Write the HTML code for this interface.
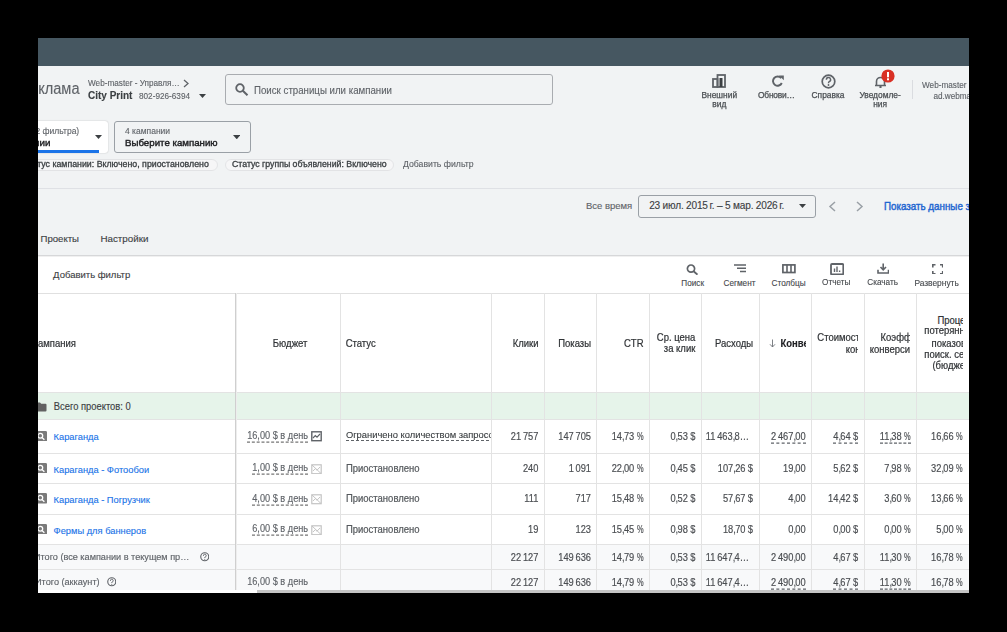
<!DOCTYPE html>
<html><head><meta charset="utf-8"><style>
html,body{margin:0;padding:0;width:1007px;height:632px;overflow:hidden;background:#000;position:relative}
body{font-family:"Liberation Sans", sans-serif}
.t{position:absolute;white-space:nowrap;line-height:1;font-family:"Liberation Sans", sans-serif;-webkit-text-stroke-width:0.12px}
div,svg{position:absolute}
</style></head><body>
<div id="wrap" style="position:absolute;left:0;top:0;width:1007px;height:632px;filter:blur(0.5px)">
<div style="position:absolute;left:0.00px;top:0.00px;width:1007.00px;height:256.00px;background:#f1f3f4"></div>
<div style="position:absolute;left:0.00px;top:38.00px;width:1007.00px;height:28.00px;background:#465761"></div>
<div style="position:absolute;left:0.00px;top:188.00px;width:1007.00px;height:1.00px;background:#dfe1e5"></div>
<div class="t" style="left:-320.50px;width:400px;text-align:right;top:82.44px;font-size:14.6px;color:#5f6368;font-weight:normal;transform:scaleY(1.080);transform-origin:0 7.25px;">Реклама</div>
<div class="t" style="left:88.00px;top:80.06px;font-size:8.2px;color:#5f6368;font-weight:normal;">Web-master - Управля…</div>
<svg style="position:absolute;left:182.00px;top:79.00px" width="8" height="9" viewBox="0 0 8 9"><path d="M2 1 L6 4.5 L2 8" stroke="#5f6368" stroke-width="1.3" fill="none"/></svg>
<div class="t" style="left:88.00px;top:91.13px;font-size:10px;color:#3c4043;font-weight:bold;">City Print</div>
<div class="t" style="left:139.00px;top:92.66px;font-size:8.2px;color:#5f6368;font-weight:normal;">802-926-6394</div>
<svg style="position:absolute;left:199.00px;top:94.00px" width="7" height="5" viewBox="0 0 7 5"><path d="M0 0 H7 L3.5 4 Z" fill="#3c4043"/></svg>
<div style="position:absolute;left:225.30px;top:73.80px;width:327.40px;height:31.40px;border:1.8px solid #a9acb0;border-radius:3px;box-sizing:border-box"></div>
<svg style="position:absolute;left:235.00px;top:83.00px" width="14" height="13" viewBox="0 0 14 13"><circle cx="5" cy="5" r="3.8" stroke="#5f6368" stroke-width="1.8" fill="none"/><path d="M7.8 7.8 L12.5 12.3" stroke="#5f6368" stroke-width="2" /></svg>
<div class="t" style="left:254.00px;top:85.69px;font-size:9.7px;color:#5f6368;font-weight:normal;transform:scaleY(1.060);transform-origin:0 4.82px;">Поиск страницы или кампании</div>
<svg style="position:absolute;left:712.00px;top:74.00px" width="15" height="14" viewBox="0 0 15 14"><rect x="5.5" y="1" width="7.5" height="12" stroke="#5f6368" stroke-width="1.8" fill="none"/><rect x="1" y="5" width="4.5" height="8" stroke="#5f6368" stroke-width="1.8" fill="none"/><rect x="7.5" y="4" width="3" height="9" fill="#3c4043"/></svg>
<div class="t" style="left:519.30px;width:400px;text-align:center;top:91.49px;font-size:8.4px;color:#4a4e52;font-weight:normal;"><span style="-webkit-text-stroke:0.25px #4a4e52">Внешний</span></div>
<div class="t" style="left:519.30px;width:400px;text-align:center;top:100.49px;font-size:8.4px;color:#4a4e52;font-weight:normal;"><span style="-webkit-text-stroke:0.25px #4a4e52">вид</span></div>
<svg style="position:absolute;left:771.00px;top:74.00px" width="14" height="13" viewBox="0 0 14 13"><path d="M10.2 4.2 A4.6 4.6 0 1 0 10.8 9" stroke="#5f6368" stroke-width="1.9" fill="none"/><path d="M8 1.5 L12.8 1.5 L12.8 6.3 Z" fill="#5f6368"/></svg>
<div class="t" style="left:576.40px;width:400px;text-align:center;top:91.29px;font-size:8.4px;color:#4a4e52;font-weight:normal;"><span style="-webkit-text-stroke:0.25px #4a4e52;letter-spacing:-0.2px">Обнови…</span></div>
<svg style="position:absolute;left:820.50px;top:73.50px" width="15" height="15" viewBox="0 0 15 15"><circle cx="7.5" cy="7.5" r="6.3" stroke="#5f6368" stroke-width="1.7" fill="none"/><path d="M5.4 5.8 A2.1 2.1 0 1 1 8.2 7.6 C7.6 8 7.5 8.3 7.5 9.2" stroke="#5f6368" stroke-width="1.5" fill="none"/><circle cx="7.5" cy="11" r="0.9" fill="#5f6368"/></svg>
<div class="t" style="left:628.00px;width:400px;text-align:center;top:91.49px;font-size:8.4px;color:#4a4e52;font-weight:normal;"><span style="-webkit-text-stroke:0.25px #4a4e52">Справка</span></div>
<svg style="position:absolute;left:873.50px;top:75.00px" width="13" height="13" viewBox="0 0 13 13"><path d="M2.5 10 V6.5 A4 4 0 0 1 10.5 6.5 V10 M1 10.5 H12" stroke="#5f6368" stroke-width="1.6" fill="none"/><circle cx="6.5" cy="12" r="1.2" fill="#5f6368"/></svg>
<svg style="position:absolute;left:880.50px;top:68.50px" width="14" height="14" viewBox="0 0 14 14"><circle cx="7" cy="7" r="6.6" fill="#d93025"/><rect x="6" y="3" width="2" height="5.3" fill="#fff"/><rect x="6" y="9.3" width="2" height="2" fill="#fff"/></svg>
<div class="t" style="left:680.10px;width:400px;text-align:center;top:91.49px;font-size:8.4px;color:#4a4e52;font-weight:normal;"><span style="-webkit-text-stroke:0.25px #4a4e52">Уведомле-</span></div>
<div class="t" style="left:680.10px;width:400px;text-align:center;top:100.19px;font-size:8.4px;color:#4a4e52;font-weight:normal;"><span style="-webkit-text-stroke:0.25px #4a4e52">ния</span></div>
<div style="position:absolute;left:912.00px;top:80.00px;width:1.00px;height:19.00px;background:#dadce0"></div>
<div class="t" style="left:922.00px;top:81.66px;font-size:8.2px;color:#5f6368;font-weight:normal;transform:scaleY(1.120);transform-origin:0 4.07px;">Web-master</div>
<div class="t" style="left:933.40px;top:92.56px;font-size:8.2px;color:#5f6368;font-weight:normal;transform:scaleY(1.120);transform-origin:0 4.07px;">ad.webmaster</div>
<div style="position:absolute;left:0.00px;top:121.00px;width:108.00px;height:32.30px;background:#fff;border-radius:3px;box-shadow:0 0 1.5px rgba(0,0,0,0.25)"></div>
<div style="position:absolute;left:0.00px;top:149.80px;width:98.60px;height:3.00px;background:#1a73e8"></div>
<div class="t" style="left:-320.80px;width:400px;text-align:right;top:127.20px;font-size:8.5px;color:#5f6368;font-weight:normal;">(2 фильтра)</div>
<div class="t" style="left:-349.60px;width:400px;text-align:right;top:137.50px;font-size:9.8px;color:#202124;font-weight:normal;"><span style="-webkit-text-stroke:0.4px #202124">Кампании</span></div>
<svg style="position:absolute;left:95.00px;top:135.00px" width="7" height="4.5" viewBox="0 0 7 4.5"><path d="M0 0 H7 L3.5 4 Z" fill="#3c4043"/></svg>
<div style="position:absolute;left:113.50px;top:121.00px;width:137.00px;height:31.80px;border:1.5px solid #9aa0a6;border-radius:3px;box-sizing:border-box"></div>
<div class="t" style="left:125.00px;top:127.10px;font-size:8.5px;color:#5f6368;font-weight:normal;">4 кампании</div>
<div class="t" style="left:125.00px;top:137.69px;font-size:9.7px;color:#202124;font-weight:normal;"><span style="-webkit-text-stroke:0.4px #202124">Выберите кампанию</span></div>
<svg style="position:absolute;left:232.70px;top:134.50px" width="7.5" height="4.8" viewBox="0 0 7.5 4.8"><path d="M0 0 H7.5 L3.75 4.3 Z" fill="#3c4043"/></svg>
<div style="position:absolute;left:-20.00px;top:158.60px;width:237.50px;height:12.00px;border:1px solid #e2e3e5;background:#f6f6f7;border-radius:7px;box-sizing:border-box"></div>
<div class="t" style="left:-191.20px;width:400px;text-align:right;top:159.85px;font-size:8.8px;color:#3c4043;font-weight:normal;"><span style="-webkit-text-stroke:0.3px #3c4043">Статус кампании: Включено, приостановлено</span></div>
<div style="position:absolute;left:224.80px;top:158.60px;width:169.70px;height:12.00px;border:1px solid #e2e3e5;background:#f6f6f7;border-radius:7px;box-sizing:border-box"></div>
<div class="t" style="left:232.00px;top:159.89px;font-size:8.75px;color:#3c4043;font-weight:normal;"><span style="-webkit-text-stroke:0.3px #3c4043">Статус группы объявлений: Включено</span></div>
<div class="t" style="left:403.00px;top:159.94px;font-size:8.7px;color:#5f6368;font-weight:normal;">Добавить фильтр</div>
<div class="t" style="left:585.90px;top:201.26px;font-size:9.5px;color:#5f6368;font-weight:normal;">Все время</div>
<div style="position:absolute;left:638.00px;top:194.50px;width:178.30px;height:23.20px;border:1.5px solid #9aa0a6;border-radius:3px;box-sizing:border-box"></div>
<div class="t" style="left:649.20px;top:201.05px;font-size:10.1px;color:#3c4043;font-weight:normal;"><span style="letter-spacing:-0.2px">23 июл. 2015&#8201;г. – 5 мар. 2026&#8201;г.</span></div>
<svg style="position:absolute;left:799.30px;top:204.00px" width="7" height="4.5" viewBox="0 0 7 4.5"><path d="M0 0 H7 L3.5 4 Z" fill="#3c4043"/></svg>
<svg style="position:absolute;left:828.00px;top:200.50px" width="9" height="11" viewBox="0 0 9 11"><path d="M7 1 L2 5.5 L7 10" stroke="#9aa0a6" stroke-width="1.5" fill="none"/></svg>
<svg style="position:absolute;left:855.00px;top:200.50px" width="9" height="11" viewBox="0 0 9 11"><path d="M2 1 L7 5.5 L2 10" stroke="#9aa0a6" stroke-width="1.5" fill="none"/></svg>
<div class="t" style="left:884.00px;top:201.50px;font-size:9.8px;color:#1f66d1;font-weight:normal;transform:scaleY(1.040);transform-origin:0 4.87px;"><span style="-webkit-text-stroke:0.4px #1f66d1">Показать данные за</span></div>
<div class="t" style="left:40.50px;top:233.97px;font-size:9.6px;color:#3c4043;font-weight:normal;">Проекты</div>
<div class="t" style="left:100.40px;top:233.80px;font-size:9.8px;color:#3c4043;font-weight:normal;">Настройки</div>
<div style="position:absolute;left:0.00px;top:254.60px;width:1007.00px;height:1.60px;background:#d6d7d9"></div>
<div style="position:absolute;left:0.00px;top:256.20px;width:1007.00px;height:375.80px;background:#fff"></div>
<div style="position:absolute;left:0.00px;top:256.20px;width:1007.00px;height:1.00px;background:#f0f0f0"></div>
<div class="t" style="left:53.10px;top:270.16px;font-size:9.5px;color:#3c4043;font-weight:normal;">Добавить фильтр</div>
<svg style="position:absolute;left:686.00px;top:263.50px" width="13" height="11" viewBox="0 0 13 11"><circle cx="5" cy="4.6" r="3.6" stroke="#5f6368" stroke-width="1.7" fill="none"/><path d="M7.6 7.2 L11.5 10.6" stroke="#5f6368" stroke-width="1.9"/></svg>
<div class="t" style="left:492.70px;width:400px;text-align:center;top:279.56px;font-size:8.2px;color:#474a4e;font-weight:normal;">Поиск</div>
<svg style="position:absolute;left:733.50px;top:264.00px" width="13" height="9" viewBox="0 0 13 9"><path d="M0 1 H12 M3 4.3 H12 M6 7.6 H12" stroke="#5f6368" stroke-width="1.5"/></svg>
<div class="t" style="left:539.50px;width:400px;text-align:center;top:279.56px;font-size:8.2px;color:#474a4e;font-weight:normal;">Сегмент</div>
<svg style="position:absolute;left:782.00px;top:264.00px" width="14" height="9.5" viewBox="0 0 14 9.5"><rect x="0.9" y="0.9" width="12" height="7.6" stroke="#5f6368" stroke-width="1.7" fill="none"/><path d="M5 1 V8.5 M9 1 V8.5" stroke="#5f6368" stroke-width="1.6"/></svg>
<div class="t" style="left:588.60px;width:400px;text-align:center;top:279.56px;font-size:8.2px;color:#474a4e;font-weight:normal;">Столбцы</div>
<svg style="position:absolute;left:829.50px;top:262.80px" width="14.5" height="12.5" viewBox="0 0 14.5 12.5"><rect x="1" y="1" width="12.3" height="10.5" rx="1" stroke="#5f6368" stroke-width="1.8" fill="none"/><path d="M4.5 9 V5.5 M7 9 V3.5 M9.6 9 V7.5" stroke="#5f6368" stroke-width="1.4"/></svg>
<div class="t" style="left:636.20px;width:400px;text-align:center;top:279.46px;font-size:8.2px;color:#474a4e;font-weight:normal;">Отчеты</div>
<svg style="position:absolute;left:876.50px;top:263.00px" width="12.5" height="11" viewBox="0 0 12.5 11"><path d="M6.2 0.5 V6.5 M3.5 4 L6.2 6.8 L9 4" stroke="#5f6368" stroke-width="1.6" fill="none"/><path d="M1 6.8 V10 H11.5 V6.8" stroke="#5f6368" stroke-width="1.6" fill="none"/></svg>
<div class="t" style="left:682.60px;width:400px;text-align:center;top:279.46px;font-size:8.2px;color:#474a4e;font-weight:normal;">Скачать</div>
<svg style="position:absolute;left:931.50px;top:263.50px" width="11.5" height="10.5" viewBox="0 0 11.5 10.5"><path d="M0.8 3.5 V0.8 H3.5 M8 0.8 H10.7 V3.5 M10.7 7 V9.7 H8 M3.5 9.7 H0.8 V7" stroke="#5f6368" stroke-width="1.6" fill="none"/></svg>
<div class="t" style="left:736.60px;width:400px;text-align:center;top:279.29px;font-size:8.4px;color:#474a4e;font-weight:normal;">Развернуть</div>
<div style="position:absolute;left:0.00px;top:292.50px;width:1007.00px;height:1.00px;background:#e0e0e0"></div>
<div style="position:absolute;left:0.00px;top:392.50px;width:1007.00px;height:27.00px;background:#e6f4ea"></div>
<div style="position:absolute;left:0.00px;top:545.00px;width:1007.00px;height:48.00px;background:#f8f9fa"></div>
<div style="position:absolute;left:0.00px;top:392.00px;width:1007.00px;height:1.00px;background:#e3e3e3"></div>
<div style="position:absolute;left:0.00px;top:419.00px;width:1007.00px;height:1.00px;background:#e3e3e3"></div>
<div style="position:absolute;left:0.00px;top:452.70px;width:1007.00px;height:1.00px;background:#e3e3e3"></div>
<div style="position:absolute;left:0.00px;top:483.30px;width:1007.00px;height:1.00px;background:#e3e3e3"></div>
<div style="position:absolute;left:0.00px;top:513.70px;width:1007.00px;height:1.00px;background:#e3e3e3"></div>
<div style="position:absolute;left:0.00px;top:544.30px;width:1007.00px;height:1.00px;background:#e3e3e3"></div>
<div style="position:absolute;left:0.00px;top:569.30px;width:1007.00px;height:1.00px;background:#e3e3e3"></div>
<div style="position:absolute;left:340.30px;top:293.00px;width:1.00px;height:300.00px;background:#e3e3e3"></div>
<div style="position:absolute;left:491.30px;top:293.00px;width:1.00px;height:300.00px;background:#e3e3e3"></div>
<div style="position:absolute;left:543.50px;top:293.00px;width:1.00px;height:300.00px;background:#e3e3e3"></div>
<div style="position:absolute;left:596.30px;top:293.00px;width:1.00px;height:300.00px;background:#e3e3e3"></div>
<div style="position:absolute;left:648.50px;top:293.00px;width:1.00px;height:300.00px;background:#e3e3e3"></div>
<div style="position:absolute;left:701.00px;top:293.00px;width:1.00px;height:300.00px;background:#e3e3e3"></div>
<div style="position:absolute;left:759.00px;top:293.00px;width:1.00px;height:300.00px;background:#e3e3e3"></div>
<div style="position:absolute;left:810.80px;top:293.00px;width:1.00px;height:300.00px;background:#e3e3e3"></div>
<div style="position:absolute;left:863.50px;top:293.00px;width:1.00px;height:300.00px;background:#e3e3e3"></div>
<div style="position:absolute;left:916.00px;top:293.00px;width:1.00px;height:300.00px;background:#e3e3e3"></div>
<div style="position:absolute;left:235.20px;top:293.00px;width:1.20px;height:300.00px;background:#cfcfcf"></div>
<div style="position:absolute;left:236.40px;top:293.00px;width:1.00px;height:300.00px;background:#ededed"></div>
<div style="position:absolute;left:256.50px;top:589.80px;width:712.50px;height:3.20px;background:#c4c4c4"></div>
<div style="position:absolute;left:0.00px;top:589.80px;width:256.50px;height:3.20px;background:#fff"></div>
<div class="t" style="left:-324.10px;width:400px;text-align:right;top:338.66px;font-size:9.5px;color:#303336;font-weight:normal;transform:scaleY(1.080);transform-origin:0 4.72px;"><span style="-webkit-text-stroke:0.2px #303336">Кампания</span></div>
<div class="t" style="left:272.80px;top:338.57px;font-size:9.6px;color:#303336;font-weight:normal;transform:scaleY(1.080);transform-origin:0 4.77px;"><span style="-webkit-text-stroke:0.2px #303336">Бюджет</span></div>
<div class="t" style="left:345.70px;top:338.66px;font-size:9.5px;color:#303336;font-weight:normal;transform:scaleY(1.080);transform-origin:0 4.72px;"><span style="-webkit-text-stroke:0.2px #303336">Статус</span></div>
<div class="t" style="left:138.60px;width:400px;text-align:right;top:338.66px;font-size:9.5px;color:#303336;font-weight:normal;transform:scaleY(1.080);transform-origin:0 4.72px;"><span style="-webkit-text-stroke:0.2px #303336">Клики</span></div>
<div class="t" style="left:191.00px;width:400px;text-align:right;top:338.66px;font-size:9.5px;color:#303336;font-weight:normal;transform:scaleY(1.080);transform-origin:0 4.72px;"><span style="-webkit-text-stroke:0.2px #303336">Показы</span></div>
<div class="t" style="left:243.50px;width:400px;text-align:right;top:338.66px;font-size:9.5px;color:#303336;font-weight:normal;transform:scaleY(1.080);transform-origin:0 4.72px;"><span style="-webkit-text-stroke:0.2px #303336">CTR</span></div>
<div class="t" style="left:295.40px;width:400px;text-align:right;top:333.46px;font-size:9.5px;color:#303336;font-weight:normal;transform:scaleY(1.080);transform-origin:0 4.72px;"><span style="-webkit-text-stroke:0.2px #303336">Ср. цена</span></div>
<div class="t" style="left:295.40px;width:400px;text-align:right;top:344.46px;font-size:9.5px;color:#303336;font-weight:normal;transform:scaleY(1.080);transform-origin:0 4.72px;"><span style="-webkit-text-stroke:0.2px #303336">за клик</span></div>
<div class="t" style="left:353.20px;width:400px;text-align:right;top:338.66px;font-size:9.5px;color:#303336;font-weight:normal;transform:scaleY(1.080);transform-origin:0 4.72px;"><span style="-webkit-text-stroke:0.2px #303336">Расходы</span></div>
<svg style="position:absolute;left:768.50px;top:339.00px" width="7" height="9" viewBox="0 0 7 9"><path d="M3.5 0.5 V8 M1 5.3 L3.5 8 L6 5.3" stroke="#6f7378" stroke-width="0.9" fill="none"/></svg>
<div style="position:absolute;left:780.5px;top:330px;width:25.5px;height:24px;overflow:hidden"><div class="t" style="left:0;top:8.66px;font-size:9.5px;color:#202124;font-weight:bold;transform:scaleY(1.08);transform-origin:0 4.72px">Конверсии</div></div>
<div style="position:absolute;left:817.30px;top:329.50px;width:40.60px;height:15.00px;overflow:hidden"><div class="t" style="left:0;top:3.96px;font-size:9.5px;color:#303336;font-weight:normal;-webkit-text-stroke:0.2px #303336;transform:scaleY(1.08);transform-origin:0 4.72px">Стоимость/</div></div>
<div style="position:absolute;left:845.70px;top:340.90px;width:12.20px;height:15.00px;overflow:hidden"><div class="t" style="left:0;top:3.96px;font-size:9.5px;color:#303336;font-weight:normal;-webkit-text-stroke:0.2px #303336;transform:scaleY(1.08);transform-origin:0 4.72px">конв.</div></div>
<div style="position:absolute;left:880.50px;top:329.50px;width:29.80px;height:15.00px;overflow:hidden"><div class="t" style="left:0;top:3.96px;font-size:9.5px;color:#303336;font-weight:normal;-webkit-text-stroke:0.2px #303336;transform:scaleY(1.08);transform-origin:0 4.72px">Коэффициент</div></div>
<div style="position:absolute;left:869.70px;top:340.90px;width:40.60px;height:15.00px;overflow:hidden"><div class="t" style="left:0;top:3.96px;font-size:9.5px;color:#303336;font-weight:normal;-webkit-text-stroke:0.2px #303336;transform:scaleY(1.08);transform-origin:0 4.72px">конверсии</div></div>
<div style="position:absolute;left:937.40px;top:312.00px;width:25.40px;height:15.00px;overflow:hidden"><div class="t" style="left:0;top:3.96px;font-size:9.5px;color:#303336;font-weight:normal;-webkit-text-stroke:0.2px #303336;transform:scaleY(1.08);transform-origin:0 4.72px">Процент</div></div>
<div style="position:absolute;left:924.30px;top:322.30px;width:38.50px;height:15.00px;overflow:hidden"><div class="t" style="left:0;top:3.96px;font-size:9.5px;color:#303336;font-weight:normal;-webkit-text-stroke:0.2px #303336;transform:scaleY(1.08);transform-origin:0 4.72px">потерянных</div></div>
<div style="position:absolute;left:931.50px;top:334.60px;width:31.30px;height:15.00px;overflow:hidden"><div class="t" style="left:0;top:3.96px;font-size:9.5px;color:#303336;font-weight:normal;-webkit-text-stroke:0.2px #303336;transform:scaleY(1.08);transform-origin:0 4.72px">показов</div></div>
<div style="position:absolute;left:924.30px;top:346.20px;width:38.50px;height:15.00px;overflow:hidden"><div class="t" style="left:0;top:3.96px;font-size:9.5px;color:#303336;font-weight:normal;-webkit-text-stroke:0.2px #303336;transform:scaleY(1.08);transform-origin:0 4.72px">поиск. сеть</div></div>
<div style="position:absolute;left:932.40px;top:357.10px;width:30.40px;height:15.00px;overflow:hidden"><div class="t" style="left:0;top:3.96px;font-size:9.5px;color:#303336;font-weight:normal;-webkit-text-stroke:0.2px #303336;transform:scaleY(1.08);transform-origin:0 4.72px">(бюджет)</div></div>
<svg style="position:absolute;left:36.00px;top:402.00px" width="11" height="9.5" viewBox="0 0 11 9.5"><path d="M0.5 1.5 Q0.5 0.5 1.5 0.5 H4 L5.2 1.8 H9.5 Q10.5 1.8 10.5 2.8 V8.5 Q10.5 9.5 9.5 9.5 H1.5 Q0.5 9.5 0.5 8.5 Z" fill="#616161"/></svg>
<div class="t" style="left:53.80px;top:401.64px;font-size:9.4px;color:#3c4043;font-weight:normal;transform:scaleY(1.140);transform-origin:0 4.67px;">Всего проектов: 0</div>
<svg style="position:absolute;left:35.50px;top:430.75px" width="11.2" height="10.6" viewBox="0 0 11.2 10.6"><rect x="0" y="0" width="11.2" height="10.6" rx="1.5" fill="#7a7a7a"/><circle cx="4.3" cy="4.8" r="2.4" stroke="#fff" stroke-width="1.3" fill="none"/><path d="M6 6.6 L8.4 8.8" stroke="#fff" stroke-width="1.4"/></svg>
<div class="t" style="left:53.60px;top:433.38px;font-size:9.3px;color:#1a73e8;font-weight:normal;">Караганда</div>
<div class="t" style="left:-91.90px;width:400px;text-align:right;top:432.06px;font-size:9.2px;color:#5f6368;font-weight:normal;transform:scaleY(1.140);transform-origin:0 4.57px;"><span style="border-bottom:1px dashed #757575">16,00 $ в день</span></div>
<svg style="position:absolute;left:311.00px;top:431.35px" width="11" height="10.5" viewBox="0 0 11 10.5"><rect x="0.8" y="0.8" width="9.4" height="8.9" stroke="#5f6368" stroke-width="1.4" fill="none"/><path d="M2 7 L4.3 4.6 L6 6.2 L9 3" stroke="#5f6368" stroke-width="1.1" fill="none"/></svg>
<div style="position:absolute;left:345.9px;top:426.85px;width:145.5px;height:14px;overflow:hidden"><div class="t" style="left:0;top:3.04px;font-size:9.4px;color:#3c4043"><span style="border-bottom:1px dashed #5f6368">Ограничено количеством запросов</span></div></div>
<div class="t" style="left:138.40px;width:400px;text-align:right;top:432.78px;font-size:9.3px;color:#4a4d51;font-weight:normal;transform:scaleY(1.140);transform-origin:0 4.62px;"><span style=";-webkit-text-stroke:0.15px #4a4d51">21<span style="letter-spacing:-0.9px"> </span>757</span></div>
<div class="t" style="left:191.00px;width:400px;text-align:right;top:432.78px;font-size:9.3px;color:#4a4d51;font-weight:normal;transform:scaleY(1.140);transform-origin:0 4.62px;"><span style=";-webkit-text-stroke:0.15px #4a4d51">147<span style="letter-spacing:-0.9px"> </span>705</span></div>
<div class="t" style="left:243.20px;width:400px;text-align:right;top:432.78px;font-size:9.3px;color:#4a4d51;font-weight:normal;transform:scaleY(1.140);transform-origin:0 4.62px;"><span style=";-webkit-text-stroke:0.15px #4a4d51">14<span style="letter-spacing:-0.7px">,</span>73<span style="letter-spacing:-0.3px"> </span><span style="display:inline-block;transform:scaleX(.8);transform-origin:0 0;margin-right:-1.65px">%</span></span></div>
<div class="t" style="left:295.30px;width:400px;text-align:right;top:432.78px;font-size:9.3px;color:#4a4d51;font-weight:normal;transform:scaleY(1.140);transform-origin:0 4.62px;"><span style=";-webkit-text-stroke:0.15px #4a4d51">0<span style="letter-spacing:-0.7px">,</span>53<span style="letter-spacing:-0.3px"> </span>$</span></div>
<div class="t" style="left:349.00px;width:400px;text-align:right;top:432.78px;font-size:9.3px;color:#4a4d51;font-weight:normal;transform:scaleY(1.140);transform-origin:0 4.62px;"><span style=";-webkit-text-stroke:0.15px #4a4d51">11<span style="letter-spacing:-0.9px"> </span>463<span style="letter-spacing:-0.7px">,</span>8…</span></div>
<div class="t" style="left:405.70px;width:400px;text-align:right;top:432.78px;font-size:9.3px;color:#4a4d51;font-weight:normal;transform:scaleY(1.140);transform-origin:0 4.62px;"><span style="border-bottom:1px dashed #5f6368;-webkit-text-stroke:0.15px #4a4d51">2<span style="letter-spacing:-0.9px"> </span>467<span style="letter-spacing:-0.7px">,</span>00</span></div>
<div class="t" style="left:458.10px;width:400px;text-align:right;top:432.78px;font-size:9.3px;color:#4a4d51;font-weight:normal;transform:scaleY(1.140);transform-origin:0 4.62px;"><span style="border-bottom:1px dashed #5f6368;-webkit-text-stroke:0.15px #4a4d51">4<span style="letter-spacing:-0.7px">,</span>64<span style="letter-spacing:-0.3px"> </span>$</span></div>
<div class="t" style="left:510.60px;width:400px;text-align:right;top:432.78px;font-size:9.3px;color:#4a4d51;font-weight:normal;transform:scaleY(1.140);transform-origin:0 4.62px;"><span style="border-bottom:1px dashed #5f6368;-webkit-text-stroke:0.15px #4a4d51">11<span style="letter-spacing:-0.7px">,</span>38<span style="letter-spacing:-0.3px"> </span><span style="display:inline-block;transform:scaleX(.8);transform-origin:0 0;margin-right:-1.65px">%</span></span></div>
<div class="t" style="left:562.60px;width:400px;text-align:right;top:432.78px;font-size:9.3px;color:#4a4d51;font-weight:normal;transform:scaleY(1.140);transform-origin:0 4.62px;"><span style=";-webkit-text-stroke:0.15px #4a4d51">16<span style="letter-spacing:-0.7px">,</span>66<span style="letter-spacing:-0.3px"> </span><span style="display:inline-block;transform:scaleX(.8);transform-origin:0 0;margin-right:-1.65px">%</span></span></div>
<svg style="position:absolute;left:35.50px;top:462.90px" width="11.2" height="10.6" viewBox="0 0 11.2 10.6"><rect x="0" y="0" width="11.2" height="10.6" rx="1.5" fill="#7a7a7a"/><circle cx="4.3" cy="4.8" r="2.4" stroke="#fff" stroke-width="1.3" fill="none"/><path d="M6 6.6 L8.4 8.8" stroke="#fff" stroke-width="1.4"/></svg>
<div class="t" style="left:53.60px;top:465.53px;font-size:9.3px;color:#1a73e8;font-weight:normal;">Караганда - Фотообои</div>
<div class="t" style="left:-91.90px;width:400px;text-align:right;top:464.21px;font-size:9.2px;color:#5f6368;font-weight:normal;transform:scaleY(1.140);transform-origin:0 4.57px;"><span style="border-bottom:1px dashed #757575">1,00 $ в день</span></div>
<svg style="position:absolute;left:311.00px;top:463.50px" width="11" height="10.5" viewBox="0 0 11 10.5"><rect x="0.8" y="0.8" width="9.4" height="8.9" stroke="#c4c4c4" stroke-width="1.2" fill="none"/><path d="M1 1 L10 9.5 M2 7 L4.3 4.6 L6 6.2 L9 3" stroke="#c4c4c4" stroke-width="1" fill="none"/></svg>
<div class="t" style="left:345.90px;top:463.66px;font-size:9.5px;color:#55595d;font-weight:normal;transform:scaleY(1.080);transform-origin:0 4.72px;"><span style="-webkit-text-stroke:0.2px #55595d">Приостановлено</span></div>
<div class="t" style="left:138.40px;width:400px;text-align:right;top:464.93px;font-size:9.3px;color:#4a4d51;font-weight:normal;transform:scaleY(1.140);transform-origin:0 4.62px;"><span style=";-webkit-text-stroke:0.15px #4a4d51">240</span></div>
<div class="t" style="left:191.00px;width:400px;text-align:right;top:464.93px;font-size:9.3px;color:#4a4d51;font-weight:normal;transform:scaleY(1.140);transform-origin:0 4.62px;"><span style=";-webkit-text-stroke:0.15px #4a4d51">1<span style="letter-spacing:-0.9px"> </span>091</span></div>
<div class="t" style="left:243.20px;width:400px;text-align:right;top:464.93px;font-size:9.3px;color:#4a4d51;font-weight:normal;transform:scaleY(1.140);transform-origin:0 4.62px;"><span style=";-webkit-text-stroke:0.15px #4a4d51">22<span style="letter-spacing:-0.7px">,</span>00<span style="letter-spacing:-0.3px"> </span><span style="display:inline-block;transform:scaleX(.8);transform-origin:0 0;margin-right:-1.65px">%</span></span></div>
<div class="t" style="left:295.30px;width:400px;text-align:right;top:464.93px;font-size:9.3px;color:#4a4d51;font-weight:normal;transform:scaleY(1.140);transform-origin:0 4.62px;"><span style=";-webkit-text-stroke:0.15px #4a4d51">0<span style="letter-spacing:-0.7px">,</span>45<span style="letter-spacing:-0.3px"> </span>$</span></div>
<div class="t" style="left:353.00px;width:400px;text-align:right;top:464.93px;font-size:9.3px;color:#4a4d51;font-weight:normal;transform:scaleY(1.140);transform-origin:0 4.62px;"><span style=";-webkit-text-stroke:0.15px #4a4d51">107<span style="letter-spacing:-0.7px">,</span>26<span style="letter-spacing:-0.3px"> </span>$</span></div>
<div class="t" style="left:405.70px;width:400px;text-align:right;top:464.93px;font-size:9.3px;color:#4a4d51;font-weight:normal;transform:scaleY(1.140);transform-origin:0 4.62px;"><span style=";-webkit-text-stroke:0.15px #4a4d51">19<span style="letter-spacing:-0.7px">,</span>00</span></div>
<div class="t" style="left:458.10px;width:400px;text-align:right;top:464.93px;font-size:9.3px;color:#4a4d51;font-weight:normal;transform:scaleY(1.140);transform-origin:0 4.62px;"><span style=";-webkit-text-stroke:0.15px #4a4d51">5<span style="letter-spacing:-0.7px">,</span>62<span style="letter-spacing:-0.3px"> </span>$</span></div>
<div class="t" style="left:510.60px;width:400px;text-align:right;top:464.93px;font-size:9.3px;color:#4a4d51;font-weight:normal;transform:scaleY(1.140);transform-origin:0 4.62px;"><span style=";-webkit-text-stroke:0.15px #4a4d51">7<span style="letter-spacing:-0.7px">,</span>98<span style="letter-spacing:-0.3px"> </span><span style="display:inline-block;transform:scaleX(.8);transform-origin:0 0;margin-right:-1.65px">%</span></span></div>
<div class="t" style="left:562.60px;width:400px;text-align:right;top:464.93px;font-size:9.3px;color:#4a4d51;font-weight:normal;transform:scaleY(1.140);transform-origin:0 4.62px;"><span style=";-webkit-text-stroke:0.15px #4a4d51">32<span style="letter-spacing:-0.7px">,</span>09<span style="letter-spacing:-0.3px"> </span><span style="display:inline-block;transform:scaleX(.8);transform-origin:0 0;margin-right:-1.65px">%</span></span></div>
<svg style="position:absolute;left:35.50px;top:493.40px" width="11.2" height="10.6" viewBox="0 0 11.2 10.6"><rect x="0" y="0" width="11.2" height="10.6" rx="1.5" fill="#7a7a7a"/><circle cx="4.3" cy="4.8" r="2.4" stroke="#fff" stroke-width="1.3" fill="none"/><path d="M6 6.6 L8.4 8.8" stroke="#fff" stroke-width="1.4"/></svg>
<div class="t" style="left:53.60px;top:496.03px;font-size:9.3px;color:#1a73e8;font-weight:normal;">Караганда - Погрузчик</div>
<div class="t" style="left:-91.90px;width:400px;text-align:right;top:494.71px;font-size:9.2px;color:#5f6368;font-weight:normal;transform:scaleY(1.140);transform-origin:0 4.57px;"><span style="border-bottom:1px dashed #757575">4,00 $ в день</span></div>
<svg style="position:absolute;left:311.00px;top:494.00px" width="11" height="10.5" viewBox="0 0 11 10.5"><rect x="0.8" y="0.8" width="9.4" height="8.9" stroke="#c4c4c4" stroke-width="1.2" fill="none"/><path d="M1 1 L10 9.5 M2 7 L4.3 4.6 L6 6.2 L9 3" stroke="#c4c4c4" stroke-width="1" fill="none"/></svg>
<div class="t" style="left:345.90px;top:494.16px;font-size:9.5px;color:#55595d;font-weight:normal;transform:scaleY(1.080);transform-origin:0 4.72px;"><span style="-webkit-text-stroke:0.2px #55595d">Приостановлено</span></div>
<div class="t" style="left:138.40px;width:400px;text-align:right;top:495.43px;font-size:9.3px;color:#4a4d51;font-weight:normal;transform:scaleY(1.140);transform-origin:0 4.62px;"><span style=";-webkit-text-stroke:0.15px #4a4d51">111</span></div>
<div class="t" style="left:191.00px;width:400px;text-align:right;top:495.43px;font-size:9.3px;color:#4a4d51;font-weight:normal;transform:scaleY(1.140);transform-origin:0 4.62px;"><span style=";-webkit-text-stroke:0.15px #4a4d51">717</span></div>
<div class="t" style="left:243.20px;width:400px;text-align:right;top:495.43px;font-size:9.3px;color:#4a4d51;font-weight:normal;transform:scaleY(1.140);transform-origin:0 4.62px;"><span style=";-webkit-text-stroke:0.15px #4a4d51">15<span style="letter-spacing:-0.7px">,</span>48<span style="letter-spacing:-0.3px"> </span><span style="display:inline-block;transform:scaleX(.8);transform-origin:0 0;margin-right:-1.65px">%</span></span></div>
<div class="t" style="left:295.30px;width:400px;text-align:right;top:495.43px;font-size:9.3px;color:#4a4d51;font-weight:normal;transform:scaleY(1.140);transform-origin:0 4.62px;"><span style=";-webkit-text-stroke:0.15px #4a4d51">0<span style="letter-spacing:-0.7px">,</span>52<span style="letter-spacing:-0.3px"> </span>$</span></div>
<div class="t" style="left:353.00px;width:400px;text-align:right;top:495.43px;font-size:9.3px;color:#4a4d51;font-weight:normal;transform:scaleY(1.140);transform-origin:0 4.62px;"><span style=";-webkit-text-stroke:0.15px #4a4d51">57<span style="letter-spacing:-0.7px">,</span>67<span style="letter-spacing:-0.3px"> </span>$</span></div>
<div class="t" style="left:405.70px;width:400px;text-align:right;top:495.43px;font-size:9.3px;color:#4a4d51;font-weight:normal;transform:scaleY(1.140);transform-origin:0 4.62px;"><span style=";-webkit-text-stroke:0.15px #4a4d51">4<span style="letter-spacing:-0.7px">,</span>00</span></div>
<div class="t" style="left:458.10px;width:400px;text-align:right;top:495.43px;font-size:9.3px;color:#4a4d51;font-weight:normal;transform:scaleY(1.140);transform-origin:0 4.62px;"><span style=";-webkit-text-stroke:0.15px #4a4d51">14<span style="letter-spacing:-0.7px">,</span>42<span style="letter-spacing:-0.3px"> </span>$</span></div>
<div class="t" style="left:510.60px;width:400px;text-align:right;top:495.43px;font-size:9.3px;color:#4a4d51;font-weight:normal;transform:scaleY(1.140);transform-origin:0 4.62px;"><span style=";-webkit-text-stroke:0.15px #4a4d51">3<span style="letter-spacing:-0.7px">,</span>60<span style="letter-spacing:-0.3px"> </span><span style="display:inline-block;transform:scaleX(.8);transform-origin:0 0;margin-right:-1.65px">%</span></span></div>
<div class="t" style="left:562.60px;width:400px;text-align:right;top:495.43px;font-size:9.3px;color:#4a4d51;font-weight:normal;transform:scaleY(1.140);transform-origin:0 4.62px;"><span style=";-webkit-text-stroke:0.15px #4a4d51">13<span style="letter-spacing:-0.7px">,</span>66<span style="letter-spacing:-0.3px"> </span><span style="display:inline-block;transform:scaleX(.8);transform-origin:0 0;margin-right:-1.65px">%</span></span></div>
<svg style="position:absolute;left:35.50px;top:523.90px" width="11.2" height="10.6" viewBox="0 0 11.2 10.6"><rect x="0" y="0" width="11.2" height="10.6" rx="1.5" fill="#7a7a7a"/><circle cx="4.3" cy="4.8" r="2.4" stroke="#fff" stroke-width="1.3" fill="none"/><path d="M6 6.6 L8.4 8.8" stroke="#fff" stroke-width="1.4"/></svg>
<div class="t" style="left:53.60px;top:526.53px;font-size:9.3px;color:#1a73e8;font-weight:normal;">Фермы для баннеров</div>
<div class="t" style="left:-91.90px;width:400px;text-align:right;top:525.21px;font-size:9.2px;color:#5f6368;font-weight:normal;transform:scaleY(1.140);transform-origin:0 4.57px;"><span style="border-bottom:1px dashed #757575">6,00 $ в день</span></div>
<svg style="position:absolute;left:311.00px;top:524.50px" width="11" height="10.5" viewBox="0 0 11 10.5"><rect x="0.8" y="0.8" width="9.4" height="8.9" stroke="#c4c4c4" stroke-width="1.2" fill="none"/><path d="M1 1 L10 9.5 M2 7 L4.3 4.6 L6 6.2 L9 3" stroke="#c4c4c4" stroke-width="1" fill="none"/></svg>
<div class="t" style="left:345.90px;top:524.66px;font-size:9.5px;color:#55595d;font-weight:normal;transform:scaleY(1.080);transform-origin:0 4.72px;"><span style="-webkit-text-stroke:0.2px #55595d">Приостановлено</span></div>
<div class="t" style="left:138.40px;width:400px;text-align:right;top:525.93px;font-size:9.3px;color:#4a4d51;font-weight:normal;transform:scaleY(1.140);transform-origin:0 4.62px;"><span style=";-webkit-text-stroke:0.15px #4a4d51">19</span></div>
<div class="t" style="left:191.00px;width:400px;text-align:right;top:525.93px;font-size:9.3px;color:#4a4d51;font-weight:normal;transform:scaleY(1.140);transform-origin:0 4.62px;"><span style=";-webkit-text-stroke:0.15px #4a4d51">123</span></div>
<div class="t" style="left:243.20px;width:400px;text-align:right;top:525.93px;font-size:9.3px;color:#4a4d51;font-weight:normal;transform:scaleY(1.140);transform-origin:0 4.62px;"><span style=";-webkit-text-stroke:0.15px #4a4d51">15<span style="letter-spacing:-0.7px">,</span>45<span style="letter-spacing:-0.3px"> </span><span style="display:inline-block;transform:scaleX(.8);transform-origin:0 0;margin-right:-1.65px">%</span></span></div>
<div class="t" style="left:295.30px;width:400px;text-align:right;top:525.93px;font-size:9.3px;color:#4a4d51;font-weight:normal;transform:scaleY(1.140);transform-origin:0 4.62px;"><span style=";-webkit-text-stroke:0.15px #4a4d51">0<span style="letter-spacing:-0.7px">,</span>98<span style="letter-spacing:-0.3px"> </span>$</span></div>
<div class="t" style="left:353.00px;width:400px;text-align:right;top:525.93px;font-size:9.3px;color:#4a4d51;font-weight:normal;transform:scaleY(1.140);transform-origin:0 4.62px;"><span style=";-webkit-text-stroke:0.15px #4a4d51">18<span style="letter-spacing:-0.7px">,</span>70<span style="letter-spacing:-0.3px"> </span>$</span></div>
<div class="t" style="left:405.70px;width:400px;text-align:right;top:525.93px;font-size:9.3px;color:#4a4d51;font-weight:normal;transform:scaleY(1.140);transform-origin:0 4.62px;"><span style=";-webkit-text-stroke:0.15px #4a4d51">0<span style="letter-spacing:-0.7px">,</span>00</span></div>
<div class="t" style="left:458.10px;width:400px;text-align:right;top:525.93px;font-size:9.3px;color:#4a4d51;font-weight:normal;transform:scaleY(1.140);transform-origin:0 4.62px;"><span style=";-webkit-text-stroke:0.15px #4a4d51">0<span style="letter-spacing:-0.7px">,</span>00<span style="letter-spacing:-0.3px"> </span>$</span></div>
<div class="t" style="left:510.60px;width:400px;text-align:right;top:525.93px;font-size:9.3px;color:#4a4d51;font-weight:normal;transform:scaleY(1.140);transform-origin:0 4.62px;"><span style=";-webkit-text-stroke:0.15px #4a4d51">0<span style="letter-spacing:-0.7px">,</span>00<span style="letter-spacing:-0.3px"> </span><span style="display:inline-block;transform:scaleX(.8);transform-origin:0 0;margin-right:-1.65px">%</span></span></div>
<div class="t" style="left:562.60px;width:400px;text-align:right;top:525.93px;font-size:9.3px;color:#4a4d51;font-weight:normal;transform:scaleY(1.140);transform-origin:0 4.62px;"><span style=";-webkit-text-stroke:0.15px #4a4d51">5<span style="letter-spacing:-0.7px">,</span>00<span style="letter-spacing:-0.3px"> </span><span style="display:inline-block;transform:scaleX(.8);transform-origin:0 0;margin-right:-1.65px">%</span></span></div>
<div class="t" style="left:-210.70px;width:400px;text-align:right;top:553.05px;font-size:9.15px;color:#5f6368;font-weight:normal;transform:scaleY(1.040);transform-origin:0 4.54px;"><span style="-webkit-text-stroke:0.15px #5f6368">Итого (все кампании в текущем пр…</span></div>
<svg style="position:absolute;left:199.90px;top:552.30px" width="9.5" height="9.5" viewBox="0 0 9.5 9.5"><circle cx="4.75" cy="4.75" r="4" stroke="#5f6368" stroke-width="1.1" fill="none"/><path d="M3.4 3.8 A1.4 1.4 0 1 1 5.2 5 C4.8 5.3 4.75 5.5 4.75 6" stroke="#5f6368" stroke-width="1" fill="none"/><circle cx="4.75" cy="7.2" r="0.55" fill="#5f6368"/></svg>
<div class="t" style="left:138.40px;width:400px;text-align:right;top:553.73px;font-size:9.3px;color:#4a4d51;font-weight:normal;transform:scaleY(1.140);transform-origin:0 4.62px;"><span style=";-webkit-text-stroke:0.15px #4a4d51">22<span style="letter-spacing:-0.9px"> </span>127</span></div>
<div class="t" style="left:191.00px;width:400px;text-align:right;top:553.73px;font-size:9.3px;color:#4a4d51;font-weight:normal;transform:scaleY(1.140);transform-origin:0 4.62px;"><span style=";-webkit-text-stroke:0.15px #4a4d51">149<span style="letter-spacing:-0.9px"> </span>636</span></div>
<div class="t" style="left:243.20px;width:400px;text-align:right;top:553.73px;font-size:9.3px;color:#4a4d51;font-weight:normal;transform:scaleY(1.140);transform-origin:0 4.62px;"><span style=";-webkit-text-stroke:0.15px #4a4d51">14<span style="letter-spacing:-0.7px">,</span>79<span style="letter-spacing:-0.3px"> </span><span style="display:inline-block;transform:scaleX(.8);transform-origin:0 0;margin-right:-1.65px">%</span></span></div>
<div class="t" style="left:295.30px;width:400px;text-align:right;top:553.73px;font-size:9.3px;color:#4a4d51;font-weight:normal;transform:scaleY(1.140);transform-origin:0 4.62px;"><span style=";-webkit-text-stroke:0.15px #4a4d51">0<span style="letter-spacing:-0.7px">,</span>53<span style="letter-spacing:-0.3px"> </span>$</span></div>
<div class="t" style="left:349.00px;width:400px;text-align:right;top:553.73px;font-size:9.3px;color:#4a4d51;font-weight:normal;transform:scaleY(1.140);transform-origin:0 4.62px;"><span style=";-webkit-text-stroke:0.15px #4a4d51">11<span style="letter-spacing:-0.9px"> </span>647<span style="letter-spacing:-0.7px">,</span>4…</span></div>
<div class="t" style="left:405.70px;width:400px;text-align:right;top:553.73px;font-size:9.3px;color:#4a4d51;font-weight:normal;transform:scaleY(1.140);transform-origin:0 4.62px;"><span style=";-webkit-text-stroke:0.15px #4a4d51">2<span style="letter-spacing:-0.9px"> </span>490<span style="letter-spacing:-0.7px">,</span>00</span></div>
<div class="t" style="left:458.10px;width:400px;text-align:right;top:553.73px;font-size:9.3px;color:#4a4d51;font-weight:normal;transform:scaleY(1.140);transform-origin:0 4.62px;"><span style=";-webkit-text-stroke:0.15px #4a4d51">4<span style="letter-spacing:-0.7px">,</span>67<span style="letter-spacing:-0.3px"> </span>$</span></div>
<div class="t" style="left:510.60px;width:400px;text-align:right;top:553.73px;font-size:9.3px;color:#4a4d51;font-weight:normal;transform:scaleY(1.140);transform-origin:0 4.62px;"><span style=";-webkit-text-stroke:0.15px #4a4d51">11<span style="letter-spacing:-0.7px">,</span>30<span style="letter-spacing:-0.3px"> </span><span style="display:inline-block;transform:scaleX(.8);transform-origin:0 0;margin-right:-1.65px">%</span></span></div>
<div class="t" style="left:562.60px;width:400px;text-align:right;top:553.73px;font-size:9.3px;color:#4a4d51;font-weight:normal;transform:scaleY(1.140);transform-origin:0 4.62px;"><span style=";-webkit-text-stroke:0.15px #4a4d51">16<span style="letter-spacing:-0.7px">,</span>78<span style="letter-spacing:-0.3px"> </span><span style="display:inline-block;transform:scaleX(.8);transform-origin:0 0;margin-right:-1.65px">%</span></span></div>
<div class="t" style="left:-300.40px;width:400px;text-align:right;top:577.90px;font-size:9.15px;color:#5f6368;font-weight:normal;transform:scaleY(1.040);transform-origin:0 4.54px;"><span style="-webkit-text-stroke:0.15px #5f6368">Итого (аккаунт)</span></div>
<svg style="position:absolute;left:106.50px;top:577.15px" width="9.5" height="9.5" viewBox="0 0 9.5 9.5"><circle cx="4.75" cy="4.75" r="4" stroke="#5f6368" stroke-width="1.1" fill="none"/><path d="M3.4 3.8 A1.4 1.4 0 1 1 5.2 5 C4.8 5.3 4.75 5.5 4.75 6" stroke="#5f6368" stroke-width="1" fill="none"/><circle cx="4.75" cy="7.2" r="0.55" fill="#5f6368"/></svg>
<div class="t" style="left:-91.90px;width:400px;text-align:right;top:577.86px;font-size:9.2px;color:#5f6368;font-weight:normal;transform:scaleY(1.140);transform-origin:0 4.57px;">16,00 $ в день</div>
<div class="t" style="left:138.40px;width:400px;text-align:right;top:578.58px;font-size:9.3px;color:#4a4d51;font-weight:normal;transform:scaleY(1.140);transform-origin:0 4.62px;"><span style=";-webkit-text-stroke:0.15px #4a4d51">22<span style="letter-spacing:-0.9px"> </span>127</span></div>
<div class="t" style="left:191.00px;width:400px;text-align:right;top:578.58px;font-size:9.3px;color:#4a4d51;font-weight:normal;transform:scaleY(1.140);transform-origin:0 4.62px;"><span style=";-webkit-text-stroke:0.15px #4a4d51">149<span style="letter-spacing:-0.9px"> </span>636</span></div>
<div class="t" style="left:243.20px;width:400px;text-align:right;top:578.58px;font-size:9.3px;color:#4a4d51;font-weight:normal;transform:scaleY(1.140);transform-origin:0 4.62px;"><span style=";-webkit-text-stroke:0.15px #4a4d51">14<span style="letter-spacing:-0.7px">,</span>79<span style="letter-spacing:-0.3px"> </span><span style="display:inline-block;transform:scaleX(.8);transform-origin:0 0;margin-right:-1.65px">%</span></span></div>
<div class="t" style="left:295.30px;width:400px;text-align:right;top:578.58px;font-size:9.3px;color:#4a4d51;font-weight:normal;transform:scaleY(1.140);transform-origin:0 4.62px;"><span style=";-webkit-text-stroke:0.15px #4a4d51">0<span style="letter-spacing:-0.7px">,</span>53<span style="letter-spacing:-0.3px"> </span>$</span></div>
<div class="t" style="left:349.00px;width:400px;text-align:right;top:578.58px;font-size:9.3px;color:#4a4d51;font-weight:normal;transform:scaleY(1.140);transform-origin:0 4.62px;"><span style=";-webkit-text-stroke:0.15px #4a4d51">11<span style="letter-spacing:-0.9px"> </span>647<span style="letter-spacing:-0.7px">,</span>4…</span></div>
<div class="t" style="left:405.70px;width:400px;text-align:right;top:578.58px;font-size:9.3px;color:#4a4d51;font-weight:normal;transform:scaleY(1.140);transform-origin:0 4.62px;"><span style="border-bottom:1px dashed #5f6368;-webkit-text-stroke:0.15px #4a4d51">2<span style="letter-spacing:-0.9px"> </span>490<span style="letter-spacing:-0.7px">,</span>00</span></div>
<div class="t" style="left:458.10px;width:400px;text-align:right;top:578.58px;font-size:9.3px;color:#4a4d51;font-weight:normal;transform:scaleY(1.140);transform-origin:0 4.62px;"><span style="border-bottom:1px dashed #5f6368;-webkit-text-stroke:0.15px #4a4d51">4<span style="letter-spacing:-0.7px">,</span>67<span style="letter-spacing:-0.3px"> </span>$</span></div>
<div class="t" style="left:510.60px;width:400px;text-align:right;top:578.58px;font-size:9.3px;color:#4a4d51;font-weight:normal;transform:scaleY(1.140);transform-origin:0 4.62px;"><span style="border-bottom:1px dashed #5f6368;-webkit-text-stroke:0.15px #4a4d51">11<span style="letter-spacing:-0.7px">,</span>30<span style="letter-spacing:-0.3px"> </span><span style="display:inline-block;transform:scaleX(.8);transform-origin:0 0;margin-right:-1.65px">%</span></span></div>
<div class="t" style="left:562.60px;width:400px;text-align:right;top:578.58px;font-size:9.3px;color:#4a4d51;font-weight:normal;transform:scaleY(1.140);transform-origin:0 4.62px;"><span style=";-webkit-text-stroke:0.15px #4a4d51">16<span style="letter-spacing:-0.7px">,</span>78<span style="letter-spacing:-0.3px"> </span><span style="display:inline-block;transform:scaleX(.8);transform-origin:0 0;margin-right:-1.65px">%</span></span></div>
<div style="position:absolute;left:0.00px;top:0.00px;width:1007.00px;height:38.00px;background:#000"></div>
<div style="position:absolute;left:0.00px;top:0.00px;width:38.00px;height:632.00px;background:#000"></div>
<div style="position:absolute;left:969.00px;top:0.00px;width:38.00px;height:632.00px;background:#000"></div>
<div style="position:absolute;left:0.00px;top:593.00px;width:1007.00px;height:39.00px;background:#000"></div>
</div>
</body></html>
